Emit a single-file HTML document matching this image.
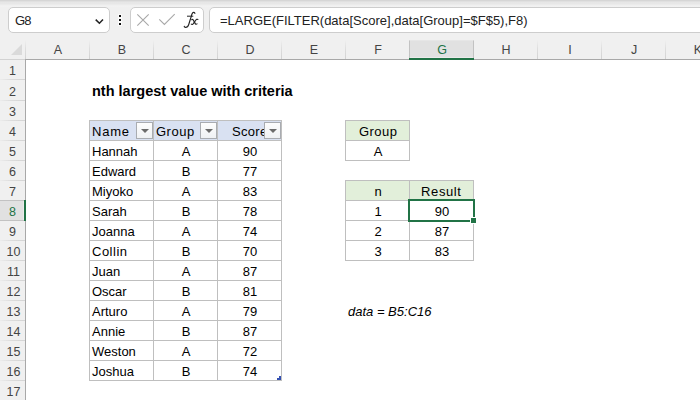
<!DOCTYPE html>
<html><head><meta charset="utf-8">
<style>
*{margin:0;padding:0;box-sizing:border-box}
html,body{width:700px;height:400px;overflow:hidden;background:#fff;font-family:"Liberation Sans",sans-serif}
.a{position:absolute}
#tb{left:0;top:0;width:700px;height:40px;background:#f0f0f0}
#tbshade{left:0;top:0;width:700px;height:7px;background:linear-gradient(#d6d6d6 0,#d6d6d6 1px,#e0e0e0 1px,#e0e0e0 2px,#e6e6e6 2px,#e7e7e7 4px,#eaeaea 4px,#ececec 5px,#efefef 5px,#f2f2f2 7px)}
.dot{width:2px;height:2px;background:#111;box-shadow:0 0 0 1px rgba(255,255,255,.7)}
.box{position:absolute;background:#fff;border:1px solid #cdcdcd;border-radius:5px}
#colhdr{left:0;top:40px;width:700px;height:20px;background:#f0f0f0}
#rowhdr{left:0;top:40px;width:25px;height:360px;background:#f0f0f0}
.ch{position:absolute;top:40px;height:19px;width:64px;text-align:center;font-size:12.5px;line-height:20px;color:#444}
.rh{position:absolute;left:0;width:25px;height:21px;padding-top:1px;text-align:center;font-size:12.5px;line-height:20px;color:#444}
.csep{position:absolute;top:40px;width:1px;height:19px;background:linear-gradient(#f0f0f0,#dedede 45%,#d2d2d2)}
.rsep{position:absolute;left:0;width:25px;height:1px;background:linear-gradient(to right,#ececec,#dcdcdc 45%,#d4d4d4)}
.t{position:absolute;font-size:13px;white-space:nowrap;color:#000;line-height:20px;padding-top:1px}
.hl{position:absolute;background:#bfbfbf}
.vl{position:absolute;background:#bfbfbf}
.dd{position:absolute;width:17px;height:17px;border:1px solid #a9acb1;background:linear-gradient(#fdfdfd,#eff1f4)}
.dd:after{content:"";position:absolute;left:4px;top:6px;border-left:4px solid transparent;border-right:4px solid transparent;border-top:4px solid #6b6b6b}
</style></head><body>
<div class="a" id="tb"></div>
<div class="a" id="tbshade"></div>
<!-- name box -->
<div class="box" style="left:8px;top:7px;width:102px;height:26px"></div>
<div class="t" style="left:15px;top:10px;color:#222;letter-spacing:-0.8px">G8</div>
<svg class="a" style="left:94px;top:17px" width="11" height="8" viewBox="0 0 11 8"><path d="M1.7 2.6 L5.4 6.3 L9 2.6" fill="none" stroke="#222" stroke-width="1.5"/></svg>
<div class="a dot" style="left:119px;top:15px"></div>
<div class="a dot" style="left:119px;top:19px"></div>
<div class="a dot" style="left:119px;top:23px"></div>
<!-- fx box -->
<div class="box" style="left:130px;top:7px;width:74px;height:26px"></div>
<svg class="a" style="left:136px;top:13px" width="15" height="15" viewBox="0 0 15 15"><path d="M1.3 1.3 L12.7 12.7 M12.7 1.3 L1.3 12.7" stroke="#a8a8a8" stroke-width="1.1" fill="none"/></svg>
<svg class="a" style="left:158px;top:13px" width="19" height="13" viewBox="0 0 19 13"><path d="M1.3 6.3 L6.4 11.5 L16.7 1.2" stroke="#a8a8a8" stroke-width="1.1" fill="none"/></svg>
<svg class="a" style="left:180px;top:9px" width="22" height="22" viewBox="0 0 22 22"><g fill="none" stroke="#222" stroke-linecap="round"><path d="M14.9 4.3 C14.6 3.3 13.4 3.1 12.6 3.9 C11.9 4.7 11.5 6.3 11.1 7.9 L8.7 15.6 C8.1 17.4 7.1 18.4 5.6 18.4 C4.8 18.4 4.2 18 4.3 17.4" stroke-width="1.2"/><path d="M7.4 7.2 L12.9 7.2" stroke-width="1"/><path d="M11.7 10.7 C12.5 10.1 13.1 10.5 13.6 11.5 L15.1 14.4 C15.6 15.3 16.3 15.5 17 14.9" stroke-width="1.2"/><path d="M17.9 10.5 C17.2 9.9 16.4 10.4 15.6 11.5 L13.3 14.6 C12.6 15.5 11.9 15.7 11.3 15.2" stroke-width="1.1"/></g></svg>
<!-- formula box -->
<div class="box" style="left:209px;top:7px;width:520px;height:26px"></div>
<div class="t" style="left:220px;top:10px;color:#222">=LARGE(FILTER(data[Score],data[Group]=$F$5),F8)</div>

<!-- headers -->
<div class="a" id="colhdr"></div>
<div class="a" id="rowhdr"></div>
<div class="a" style="left:11px;top:44px;width:0;height:0;border-left:11px solid transparent;border-bottom:11px solid #dadada"></div>
<div class="csep" style="left:25px"></div>
<div class="a" style="left:25px;top:59px;width:1px;height:341px;background:#a8a8a8"></div>
<div class="a" style="left:0;top:59px;width:25px;height:1px;background:#d2d2d2"></div>
<div class="a" style="left:25px;top:59px;width:675px;height:1px;background:#a8a8a8"></div>

<div class="csep" style="left:89px"></div>
<div class="csep" style="left:153px"></div>
<div class="csep" style="left:217px"></div>
<div class="csep" style="left:281px"></div>
<div class="csep" style="left:345px"></div>
<div class="csep" style="left:409px"></div>
<div class="csep" style="left:473px"></div>
<div class="csep" style="left:537px"></div>
<div class="csep" style="left:601px"></div>
<div class="csep" style="left:665px"></div>
<div class="a" style="left:409px;top:40px;width:65px;height:19px;background:#e1e1e1;border-left:1px solid #c2c2c2;border-right:1px solid #c2c2c2;border-top:1px solid #e6e6e6"></div>
<div class="a" style="left:410px;top:57px;width:63px;height:1px;background:#ebebeb"></div>
<div class="a" style="left:409px;top:58px;width:65px;height:2px;background:#217346"></div>

<div class="ch" style="left:26px">A</div>
<div class="ch" style="left:90px">B</div>
<div class="ch" style="left:154px">C</div>
<div class="ch" style="left:218px">D</div>
<div class="ch" style="left:282px">E</div>
<div class="ch" style="left:346px">F</div>
<div class="ch" style="left:410px;color:#217346">G</div>
<div class="ch" style="left:474px">H</div>
<div class="ch" style="left:538px">I</div>
<div class="ch" style="left:602px">J</div>
<div class="ch" style="left:666px">K</div>

<div class="rsep" style="top:79px"></div>
<div class="rsep" style="top:100px"></div>
<div class="rsep" style="top:120px"></div>
<div class="rsep" style="top:140px"></div>
<div class="rsep" style="top:160px"></div>
<div class="rsep" style="top:180px"></div>
<div class="rsep" style="top:200px"></div>
<div class="rsep" style="top:220px"></div>
<div class="rsep" style="top:240px"></div>
<div class="rsep" style="top:260px"></div>
<div class="rsep" style="top:280px"></div>
<div class="rsep" style="top:300px"></div>
<div class="rsep" style="top:320px"></div>
<div class="rsep" style="top:340px"></div>
<div class="rsep" style="top:360px"></div>
<div class="rsep" style="top:380px"></div>
<div class="a" style="left:0;top:200px;width:24px;height:21px;background:#e1e1e1;border-top:1px solid #c2c2c2;border-bottom:1px solid #c2c2c2"></div>
<div class="a" style="left:23px;top:201px;width:1px;height:19px;background:#ebebeb"></div>
<div class="a" style="left:24px;top:200px;width:2px;height:21px;background:#217346"></div>

<div class="rh" style="top:60px">1</div>
<div class="rh" style="top:81px">2</div>
<div class="rh" style="top:101px">3</div>
<div class="rh" style="top:121px">4</div>
<div class="rh" style="top:141px">5</div>
<div class="rh" style="top:161px">6</div>
<div class="rh" style="top:181px">7</div>
<div class="rh" style="top:201px;color:#217346">8</div>
<div class="rh" style="top:221px">9</div>
<div class="rh" style="top:241px;left:1px">10</div>
<div class="rh" style="top:261px;left:1px">11</div>
<div class="rh" style="top:281px;left:1px">12</div>
<div class="rh" style="top:301px;left:1px">13</div>
<div class="rh" style="top:321px;left:1px">14</div>
<div class="rh" style="top:341px;left:1px">15</div>
<div class="rh" style="top:361px;left:1px">16</div>
<div class="rh" style="top:381px;left:1px">17</div>

<!-- title -->
<div class="t" style="left:92px;top:80px;font-weight:bold;font-size:14.5px">nth largest value with criteria</div>

<!-- main table -->
<div class="a" style="left:90px;top:121px;width:191px;height:19px;background:#d9e1f2"></div>
<div class="hl" style="left:89px;top:120px;width:193px;height:1px"></div>
<div class="hl" style="left:89px;top:140px;width:193px;height:1px"></div>
<div class="hl" style="left:89px;top:160px;width:193px;height:1px"></div>
<div class="hl" style="left:89px;top:180px;width:193px;height:1px"></div>
<div class="hl" style="left:89px;top:200px;width:193px;height:1px"></div>
<div class="hl" style="left:89px;top:220px;width:193px;height:1px"></div>
<div class="hl" style="left:89px;top:240px;width:193px;height:1px"></div>
<div class="hl" style="left:89px;top:260px;width:193px;height:1px"></div>
<div class="hl" style="left:89px;top:280px;width:193px;height:1px"></div>
<div class="hl" style="left:89px;top:300px;width:193px;height:1px"></div>
<div class="hl" style="left:89px;top:320px;width:193px;height:1px"></div>
<div class="hl" style="left:89px;top:340px;width:193px;height:1px"></div>
<div class="hl" style="left:89px;top:360px;width:193px;height:1px"></div>
<div class="hl" style="left:89px;top:380px;width:193px;height:1px"></div>
<div class="vl" style="left:89px;top:120px;width:1px;height:261px"></div>
<div class="vl" style="left:153px;top:120px;width:1px;height:261px"></div>
<div class="vl" style="left:217px;top:120px;width:1px;height:261px"></div>
<div class="vl" style="left:281px;top:120px;width:1px;height:261px"></div>

<div class="t" style="left:92px;top:121px;letter-spacing:0.8px">Name</div>
<div class="t" style="left:156px;top:121px;letter-spacing:0.5px">Group</div>
<div class="t" style="left:232px;top:121px;letter-spacing:0.3px">Score</div>
<div class="dd" style="left:136px;top:122px"></div>
<div class="dd" style="left:200px;top:122px"></div>
<div class="dd" style="left:264px;top:122px"></div>

<div class="t" style="left:92px;top:141px">Hannah</div>
<div class="t" style="left:92px;top:161px">Edward</div>
<div class="t" style="left:92px;top:181px">Miyoko</div>
<div class="t" style="left:92px;top:201px">Sarah</div>
<div class="t" style="left:92px;top:221px">Joanna</div>
<div class="t" style="left:92px;top:241px;letter-spacing:0.5px">Collin</div>
<div class="t" style="left:92px;top:261px">Juan</div>
<div class="t" style="left:92px;top:281px">Oscar</div>
<div class="t" style="left:92px;top:301px">Arturo</div>
<div class="t" style="left:92px;top:321px">Annie</div>
<div class="t" style="left:92px;top:341px">Weston</div>
<div class="t" style="left:92px;top:361px">Joshua</div>

<div class="t" style="left:154px;width:64px;text-align:center;top:141px">A</div>
<div class="t" style="left:154px;width:64px;text-align:center;top:161px">B</div>
<div class="t" style="left:154px;width:64px;text-align:center;top:181px">A</div>
<div class="t" style="left:154px;width:64px;text-align:center;top:201px">B</div>
<div class="t" style="left:154px;width:64px;text-align:center;top:221px">A</div>
<div class="t" style="left:154px;width:64px;text-align:center;top:241px">B</div>
<div class="t" style="left:154px;width:64px;text-align:center;top:261px">A</div>
<div class="t" style="left:154px;width:64px;text-align:center;top:281px">B</div>
<div class="t" style="left:154px;width:64px;text-align:center;top:301px">A</div>
<div class="t" style="left:154px;width:64px;text-align:center;top:321px">B</div>
<div class="t" style="left:154px;width:64px;text-align:center;top:341px">A</div>
<div class="t" style="left:154px;width:64px;text-align:center;top:361px">B</div>

<div class="t" style="left:218px;width:64px;text-align:center;top:141px">90</div>
<div class="t" style="left:218px;width:64px;text-align:center;top:161px">77</div>
<div class="t" style="left:218px;width:64px;text-align:center;top:181px">83</div>
<div class="t" style="left:218px;width:64px;text-align:center;top:201px">78</div>
<div class="t" style="left:218px;width:64px;text-align:center;top:221px">74</div>
<div class="t" style="left:218px;width:64px;text-align:center;top:241px">70</div>
<div class="t" style="left:218px;width:64px;text-align:center;top:261px">87</div>
<div class="t" style="left:218px;width:64px;text-align:center;top:281px">81</div>
<div class="t" style="left:218px;width:64px;text-align:center;top:301px">79</div>
<div class="t" style="left:218px;width:64px;text-align:center;top:321px">87</div>
<div class="t" style="left:218px;width:64px;text-align:center;top:341px">72</div>
<div class="t" style="left:218px;width:64px;text-align:center;top:361px">74</div>
<div class="a" style="left:279px;top:376px;width:2px;height:2px;background:#3451b2"></div>
<div class="a" style="left:277px;top:378px;width:4px;height:2px;background:#3451b2"></div>

<!-- group box -->
<div class="a" style="left:346px;top:121px;width:63px;height:19px;background:#e2efda"></div>
<div class="hl" style="left:345px;top:120px;width:65px;height:1px"></div>
<div class="hl" style="left:345px;top:140px;width:65px;height:1px"></div>
<div class="hl" style="left:345px;top:160px;width:65px;height:1px"></div>
<div class="vl" style="left:345px;top:120px;width:1px;height:41px"></div>
<div class="vl" style="left:409px;top:120px;width:1px;height:41px"></div>
<div class="t" style="left:346px;width:64px;text-align:center;top:121px;letter-spacing:0.5px;text-indent:0.5px">Group</div>
<div class="t" style="left:346px;width:64px;text-align:center;top:141px">A</div>

<!-- n/result table -->
<div class="a" style="left:346px;top:181px;width:127px;height:19px;background:#e2efda"></div>
<div class="hl" style="left:345px;top:180px;width:129px;height:1px"></div>
<div class="hl" style="left:345px;top:200px;width:129px;height:1px"></div>
<div class="hl" style="left:345px;top:220px;width:129px;height:1px"></div>
<div class="hl" style="left:345px;top:240px;width:129px;height:1px"></div>
<div class="hl" style="left:345px;top:260px;width:129px;height:1px"></div>
<div class="vl" style="left:345px;top:180px;width:1px;height:81px"></div>
<div class="vl" style="left:409px;top:180px;width:1px;height:81px"></div>
<div class="vl" style="left:473px;top:180px;width:1px;height:81px"></div>
<div class="t" style="left:346px;width:64px;text-align:center;top:181px">n</div>
<div class="t" style="left:409px;width:64px;text-align:center;top:181px;letter-spacing:0.6px;text-indent:0.6px">Result</div>
<div class="t" style="left:346px;width:64px;text-align:center;top:201px">1</div>
<div class="t" style="left:346px;width:64px;text-align:center;top:221px">2</div>
<div class="t" style="left:346px;width:64px;text-align:center;top:241px">3</div>
<div class="t" style="left:410px;width:64px;text-align:center;top:201px">90</div>
<div class="t" style="left:410px;width:64px;text-align:center;top:221px">87</div>
<div class="t" style="left:410px;width:64px;text-align:center;top:241px">83</div>

<!-- selection -->
<div class="a" style="left:408px;top:199px;width:67px;height:23px;border:2px solid #217346"></div>
<div class="a" style="left:470px;top:217px;width:7px;height:7px;background:#fff"></div>
<div class="a" style="left:471px;top:218px;width:5px;height:5px;background:#217346"></div>

<div class="t" style="left:348px;top:301px;font-style:italic">data = B5:C16</div>
</body></html>
